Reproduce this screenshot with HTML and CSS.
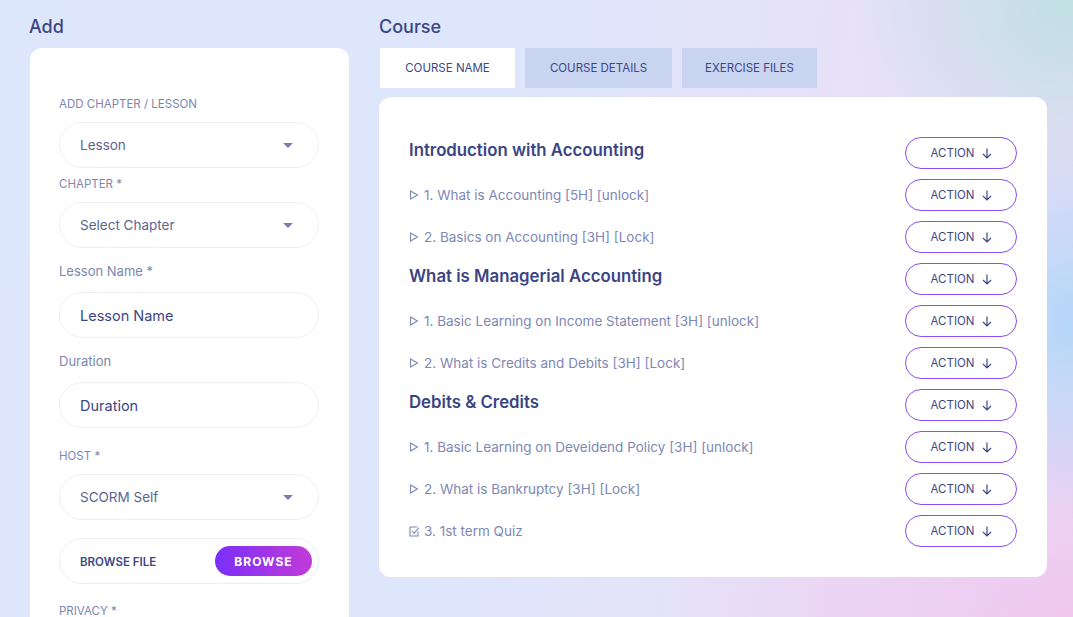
FILE: index.html
```html
<!DOCTYPE html>
<html lang="en">
<head>
<meta charset="utf-8">
<title>Course</title>
<link rel="stylesheet" href="styles.css">
</head>
<body>
<div class="page">
  <section class="col-left">
    <h2 class="title">Add</h2>
    <div class="form-card">
      <label class="label up">ADD CHAPTER / LESSON</label>
      <div class="field select"><span>Lesson</span><i class="caret"></i></div>

      <label class="label up l2">CHAPTER *</label>
      <div class="field select"><span>Select Chapter</span><i class="caret"></i></div>

      <label class="label l3">Lesson Name *</label>
      <div class="field input"><span>Lesson Name</span></div>

      <label class="label l3">Duration</label>
      <div class="field input"><span>Duration</span></div>

      <label class="label up l4">HOST *</label>
      <div class="field select"><span>SCORM Self</span><i class="caret"></i></div>

      <div class="field browse"><span class="bf">BROWSE FILE</span><button class="browse-btn">BROWSE</button></div>

      <label class="label up l5">PRIVACY *</label>
    </div>
  </section>

  <section class="col-right">
    <h2 class="title">Course</h2>
    <div class="tabs">
      <div class="tab active">COURSE NAME</div>
      <div class="tab">COURSE DETAILS</div>
      <div class="tab">EXERCISE FILES</div>
    </div>
    <div class="course-card">
      <div class="row"><h3 class="chapter">Introduction with Accounting</h3><button class="action">ACTION <svg class="arr" viewBox="0 0 10 11"><path d="M5 0.5V10M1 6l4 4 4-4"/></svg></button></div>
      <div class="row"><p class="lesson"><svg class="play" viewBox="0 0 10 10"><path d="M1.5 1l7 4-7 4z"/></svg>1. What is Accounting [5H] [unlock]</p><button class="action">ACTION <svg class="arr" viewBox="0 0 10 11"><path d="M5 0.5V10M1 6l4 4 4-4"/></svg></button></div>
      <div class="row"><p class="lesson"><svg class="play" viewBox="0 0 10 10"><path d="M1.5 1l7 4-7 4z"/></svg>2. Basics on Accounting [3H] [Lock]</p><button class="action">ACTION <svg class="arr" viewBox="0 0 10 11"><path d="M5 0.5V10M1 6l4 4 4-4"/></svg></button></div>
      <div class="row"><h3 class="chapter">What is Managerial Accounting</h3><button class="action">ACTION <svg class="arr" viewBox="0 0 10 11"><path d="M5 0.5V10M1 6l4 4 4-4"/></svg></button></div>
      <div class="row"><p class="lesson"><svg class="play" viewBox="0 0 10 10"><path d="M1.5 1l7 4-7 4z"/></svg>1. Basic Learning on Income Statement [3H] [unlock]</p><button class="action">ACTION <svg class="arr" viewBox="0 0 10 11"><path d="M5 0.5V10M1 6l4 4 4-4"/></svg></button></div>
      <div class="row"><p class="lesson"><svg class="play" viewBox="0 0 10 10"><path d="M1.5 1l7 4-7 4z"/></svg>2. What is Credits and Debits [3H] [Lock]</p><button class="action">ACTION <svg class="arr" viewBox="0 0 10 11"><path d="M5 0.5V10M1 6l4 4 4-4"/></svg></button></div>
      <div class="row"><h3 class="chapter">Debits &amp; Credits</h3><button class="action">ACTION <svg class="arr" viewBox="0 0 10 11"><path d="M5 0.5V10M1 6l4 4 4-4"/></svg></button></div>
      <div class="row"><p class="lesson"><svg class="play" viewBox="0 0 10 10"><path d="M1.5 1l7 4-7 4z"/></svg>1. Basic Learning on Deveidend Policy [3H] [unlock]</p><button class="action">ACTION <svg class="arr" viewBox="0 0 10 11"><path d="M5 0.5V10M1 6l4 4 4-4"/></svg></button></div>
      <div class="row"><p class="lesson"><svg class="play" viewBox="0 0 10 10"><path d="M1.5 1l7 4-7 4z"/></svg>2. What is Bankruptcy [3H] [Lock]</p><button class="action">ACTION <svg class="arr" viewBox="0 0 10 11"><path d="M5 0.5V10M1 6l4 4 4-4"/></svg></button></div>
      <div class="row"><p class="lesson"><svg class="check" viewBox="0 0 11 11"><path d="M9 5.5V10H1V1h7"/><path d="M3 5l2.2 2.4L10 1.5"/></svg>3. 1st term Quiz</p><button class="action">ACTION <svg class="arr" viewBox="0 0 10 11"><path d="M5 0.5V10M1 6l4 4 4-4"/></svg></button></div>
    </div>
  </section>
</div>
</body>
</html>
```

FILE: styles.css
```css
* { box-sizing: border-box; }
html, body { height: 100%; }
body {
  margin: 0;
  overflow: hidden;
  font-family: Inter, "Open Sans", sans-serif;
  color: #3c4786;
  background-color: #e0e7fb;
  background-image:
    radial-gradient(ellipse 220px 200px at 100% 0%, rgba(190, 224, 226, 0.95), rgba(190, 224, 226, 0) 100%),
    radial-gradient(ellipse 170px 200px at 100% 52%, rgba(178, 214, 248, 0.95), rgba(178, 214, 248, 0) 100%),
    radial-gradient(ellipse 400px 260px at 100% 100%, rgba(240, 200, 240, 1), rgba(240, 200, 240, 0) 100%),
    linear-gradient(100deg, #dde7fc 0%, #dee6fb 45%, #e7e0f8 75%, #e8dcf6 100%);
}
.page {
  display: flex;
  gap: 30px;
  padding: 0 26px 0 30px;
}
.title {
  margin: 0;
  padding-top: 15px;
  height: 48px;
  font-size: 18px;
  line-height: 24px;
  font-weight: 500;
  color: #3b4583;
}
.col-left { width: 319px; flex: none; }
.col-left .title { margin-left: -1px; }
.col-right { flex: 1; }

/* form card */
.form-card {
  background: #fff;
  border-radius: 12px 12px 0 0;
  padding: 47px 30px 0 29px;
  height: 569px;
  overflow: hidden;
}
.label {
  display: block;
  font-size: 12.5px;
  line-height: 18px;
  color: #7d86b2;
  margin-bottom: 9px;
}
.label.up { font-size: 11.5px; }
.label.l2 { margin-top: 7px; }
.label.l3 { margin-top: 14px; margin-bottom: 12px; font-size: 13px; }
.label.l4 { margin-top: 19px; }
.label.l5 { margin-top: 18px; margin-bottom: 0; }
.field {
  height: 46px;
  border: 1px solid #eceef6;
  border-radius: 23px;
  display: flex;
  align-items: center;
  padding: 0 20px 0 20px;
  font-size: 13.5px;
  color: #5c6593;
}
.field.select { justify-content: space-between; padding-right: 25px; }
.field.input { font-size: 14.5px; color: #3c4786; }
.caret {
  width: 0; height: 0;
  border-left: 5px solid transparent;
  border-right: 5px solid transparent;
  border-top: 5px solid #7a80a8;
}
.field.browse {
  margin-top: 18px;
  justify-content: space-between;
  padding-right: 6px;
}
.bf { font-size: 11.5px; font-weight: 600; color: #3c4786; padding-top: 2px; }
.browse-btn {
  width: 97px;
  height: 30px;
  border: none;
  border-radius: 15px;
  background: linear-gradient(90deg, #7a2ff8 0%, #c13bd8 100%);
  color: #fff;
  font-family: inherit;
  font-size: 12px;
  font-weight: 700;
  letter-spacing: 1px;
}

/* tabs */
.tabs {
  display: flex;
  gap: 10px;
  padding-left: 1px;
  margin-bottom: 9px;
}
.tab {
  height: 40px;
  display: flex;
  align-items: center;
  justify-content: center;
  font-size: 11.5px;
  color: #3c4786;
  background: #c9d4f1;
  padding: 0 10px;
}
.tab:nth-child(1) { width: 135px; }
.tab:nth-child(2) { width: 147px; }
.tab:nth-child(3) { width: 135px; }
.tab.active { background: #fff; }

/* course card */
.course-card {
  background: #fff;
  border-radius: 12px;
  padding: 40px 30px 30px 30px;
  display: flex;
  flex-direction: column;
  gap: 10px;
}
.row {
  height: 32px;
  display: flex;
  align-items: center;
  justify-content: space-between;
}
.chapter {
  margin: 0 0 6px 0;
  font-size: 16.8px;
  font-weight: 600;
  color: #3b4583;
}
.lesson {
  margin: 0;
  font-size: 13.5px;
  color: #7e88b5;
  display: flex;
  align-items: center;
}
.play, .check {
  flex: none;
  fill: none;
  stroke: #7e88b5;
  stroke-width: 1.1;
}
.play { width: 10px; height: 10px; margin-right: 5px; }
.check { width: 11px; height: 11px; margin-right: 4px; }
.action {
  width: 112px;
  height: 32px;
  border: 1px solid #8a4ef4;
  border-radius: 16px;
  background: #fff;
  font-family: inherit;
  font-size: 11.5px;
  color: #3c4786;
  display: flex;
  align-items: center;
  justify-content: center;
  gap: 8px;
  padding: 0 0 0 1px;
}
.arr {
  width: 10px;
  height: 11px;
  fill: none;
  stroke: #3c4786;
  stroke-width: 1.2;
}
```
